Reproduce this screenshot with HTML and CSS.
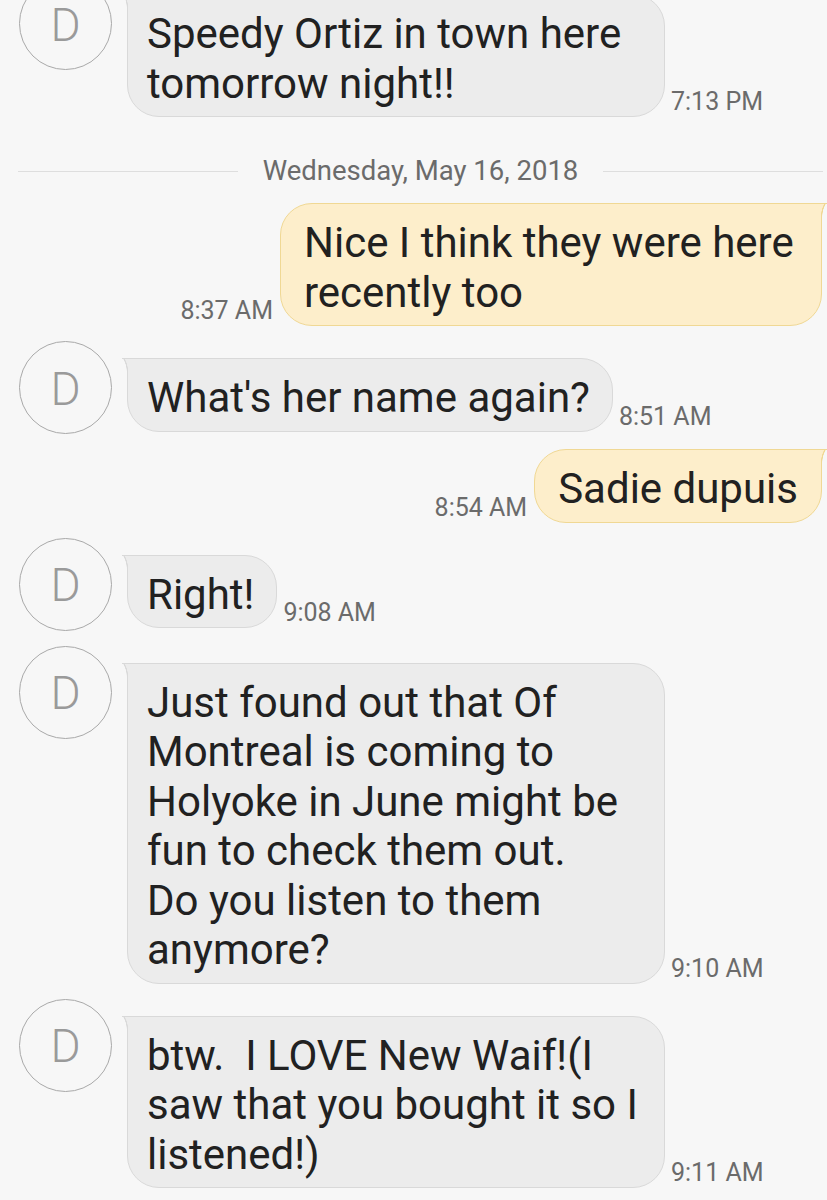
FILE: index.html
```html
<!DOCTYPE html>
<html>
<head>
<meta charset="utf-8">
<link rel="stylesheet" href="styles.css">
</head>
<body>
<div class="thread">
  <div class="row in">
    <div class="avatar">D</div>
    <div class="msg">
      <div class="bubble in wide">Speedy Ortiz in town here<br>tomorrow night!!</div>
      <div class="time">7:13 PM</div>
    </div>
  </div>

  <div class="date-sep"><span>Wednesday, May 16, 2018</span></div>

  <div class="row out">
    <div class="time">8:37 AM</div>
    <div class="bubble out wide">Nice I think they were here<br>recently too</div>
  </div>

  <div class="row in">
    <div class="avatar">D</div>
    <div class="msg">
      <div class="bubble in">What's her name again?</div>
      <div class="time">8:51 AM</div>
    </div>
  </div>

  <div class="row out">
    <div class="time">8:54 AM</div>
    <div class="bubble out">Sadie dupuis</div>
  </div>

  <div class="row in">
    <div class="avatar">D</div>
    <div class="msg">
      <div class="bubble in">Right!</div>
      <div class="time">9:08 AM</div>
    </div>
  </div>

  <div class="row in">
    <div class="avatar">D</div>
    <div class="msg">
      <div class="bubble in wide">Just found out that Of<br>Montreal is coming to<br>Holyoke in June might be<br>fun to check them out.<br>Do you listen to them<br>anymore?</div>
      <div class="time">9:10 AM</div>
    </div>
  </div>

  <div class="row in">
    <div class="avatar">D</div>
    <div class="msg">
      <div class="bubble in wide">btw.&nbsp; I LOVE New Waif!(I<br>saw that you bought it so I<br>listened!)</div>
      <div class="time">9:11 AM</div>
    </div>
  </div>
</div>
</body>
</html>
```

FILE: styles.css
```css
html, body {
  margin: 0;
  padding: 0;
  background: #f7f7f7;
}

body {
  width: 827px;
  height: 1200px;
  overflow: hidden;
  font-family: Roboto, "Liberation Sans", sans-serif;
}

.thread {
  display: flex;
  flex-direction: column;
  gap: 15px;
  margin-top: -23px;
}

.row {
  display: flex;
}

.row.in {
  align-items: flex-start;
  padding-left: 19px;
}

.row.out {
  justify-content: flex-end;
  align-items: flex-end;
  padding-right: 5px;
}

.avatar {
  flex: none;
  width: 93px;
  height: 93px;
  box-sizing: border-box;
  border: 1px solid #a9a9a9;
  border-radius: 50%;
  display: flex;
  align-items: center;
  justify-content: center;
  font-size: 46px;
  font-weight: 300;
  color: #9a9a9a;
  padding-top: 2px;
}

.msg {
  display: flex;
  align-items: flex-end;
  margin-left: 15px;
  margin-top: 17px;
}

.bubble {
  position: relative;
  box-sizing: border-box;
  font-size: 42px;
  line-height: 49.5px;
  color: #212121;
  padding: 14px 22px 8px 19px;
  border: 1px solid #d9d9d9;
  background: #ececec;
  border-radius: 0 32px 32px 32px;
  white-space: nowrap;
}

.bubble.in.wide {
  width: 538px;
}

.bubble.in::before {
  content: "";
  position: absolute;
  left: -6px;
  top: -1px;
  width: 6px;
  height: 14px;
  background:
    linear-gradient(#d9d9d9, #d9d9d9) top / 100% 1px no-repeat,
    radial-gradient(circle at -21.5px 14px, transparent 26px, #d9d9d9 26.5px, #d9d9d9 27.3px, #ececec 27.8px);
}

.bubble.out {
  background: #fdeecb;
  border-color: #f0d894;
  border-radius: 32px 0 32px 32px;
  padding: 14px 23px 8px 23px;
}

.bubble.out.wide {
  width: 542px;
}

.bubble.out::before {
  content: "";
  position: absolute;
  right: -6px;
  top: -1px;
  width: 6px;
  height: 14px;
  background:
    linear-gradient(#f0d894, #f0d894) top / 100% 1px no-repeat,
    radial-gradient(circle at 27.5px 14px, transparent 26px, #f0d894 26.5px, #f0d894 27.3px, #fdeecb 27.8px);
}

.time {
  flex: none;
  font-size: 25px;
  line-height: 30px;
  color: #6b6b6b;
  margin-bottom: 0;
  white-space: nowrap;
}

.msg .time {
  margin-left: 6px;
}

.row.out .time {
  margin-right: 7px;
}

.date-sep {
  display: flex;
  align-items: center;
  gap: 25px;
  height: 56px;
  box-sizing: border-box;
  padding: 24px 4px 2px 18px;
  font-size: 27.5px;
  line-height: 30px;
  color: #6b6b6b;
}

.date-sep::before,
.date-sep::after {
  content: "";
  flex: 1;
  height: 1px;
  background: #dedede;
}
```
